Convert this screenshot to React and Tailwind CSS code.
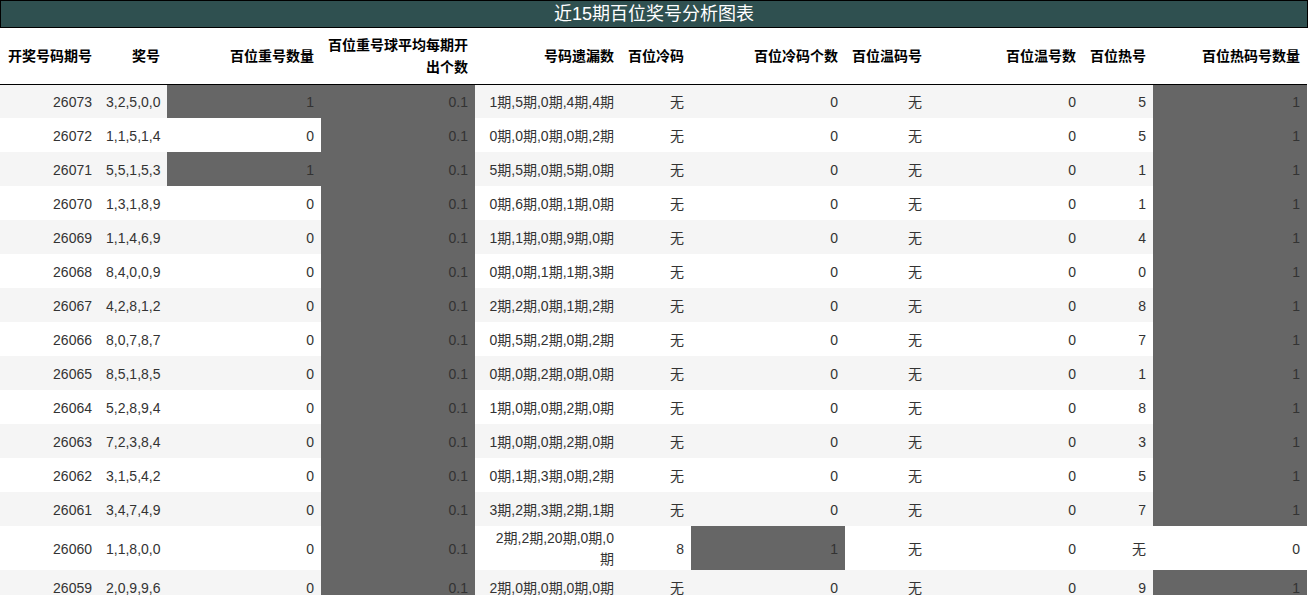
const rows = [
["26073","3,2,5,0,0","1","1期,5期,0期,4期,4期","无","0","5","1"],
["26072","1,1,5,1,4","0","0期,0期,0期,0期,2期","无","0","5","1"],
["26071","5,5,1,5,3","1","5期,5期,0期,5期,0期","无","0","1","1"],
["26070","1,3,1,8,9","0","0期,6期,0期,1期,0期","无","0","1","1"],
["26069","1,1,4,6,9","0","1期,1期,0期,9期,0期","无","0","4","1"],
["26068","8,4,0,0,9","0","0期,0期,1期,1期,3期","无","0","0","1"],
["26067","4,2,8,1,2","0","2期,2期,0期,1期,2期","无","0","8","1"],
["26066","8,0,7,8,7","0","0期,5期,2期,0期,2期","无","0","7","1"],
["26065","8,5,1,8,5","0","0期,0期,2期,0期,0期","无","0","1","1"],
["26064","5,2,8,9,4","0","1期,0期,0期,2期,0期","无","0","8","1"],
["26063","7,2,3,8,4","0","1期,0期,0期,2期,0期","无","0","3","1"],
["26062","3,1,5,4,2","0","0期,1期,3期,0期,2期","无","0","5","1"],
["26061","3,4,7,4,9","0","3期,2期,3期,2期,1期","无","0","7","1"],
["26060","1,1,8,0,0","0","2期,2期,20期,0期,0期","8","1","无","0"],
["26059","2,0,9,9,6","0","2期,0期,0期,0期,0期","无","0","9","1"],
];
const W=[99,68,154,154,146,70,154,84,154,70,154];
const heads=["开奖号码期号","奖号","百位重号数量","百位重号球平均每期开出个数","号码遗漏数","百位冷码","百位冷码个数","百位温码号","百位温号数","百位热号","百位热码号数量"];
export default function App(){
  return <div className="w-[1308px] text-[#333]" style={{fontFamily:'"Liberation Sans","Noto Sans CJK SC",sans-serif'}}>
    <div className="h-[28px] bg-[#2f5050] border border-black text-white text-[18px] leading-[26px] text-center">近15期百位奖号分析图表</div>
    <table className="border-collapse table-fixed w-[1307px] text-[14px]">
      <colgroup>{W.map((w,i)=><col key={i} style={{width:w}}/>)}</colgroup>
      <thead><tr className="h-[56px] border-b border-black">
        {heads.map((h,i)=><th key={i} className="text-right font-bold px-[7px] align-middle leading-[22px] text-[14px] text-black">{h}</th>)}
      </tr></thead>
      <tbody>{rows.map((r,i)=>{
        const g=(c)=>c?"bg-[#666666]":"";
        const cell="h-[34px] px-[7px] text-right align-middle pt-[2px]";
        return <tr key={i} className={i%2===0?"bg-[#f5f5f5]":"bg-white"}>
          <td className={cell}>{r[0]}</td>
          <td className={cell+" text-left px-[6px]"}>{r[1]}</td>
          <td className={cell+" "+g(r[2]==="1")}>{r[2]}</td>
          <td className={cell+" bg-[#666666]"}>0.1</td>
          <td className={cell}>{r[3]}</td>
          <td className={cell}>{r[4]}</td>
          <td className={cell+" "+g(r[5]==="1")}>{r[5]}</td>
          <td className={cell}>无</td>
          <td className={cell}>0</td>
          <td className={cell}>{r[6]}</td>
          <td className={cell+" "+g(r[7]==="1")}>{r[7]}</td>
        </tr>})}</tbody>
    </table>
  </div>;
}
